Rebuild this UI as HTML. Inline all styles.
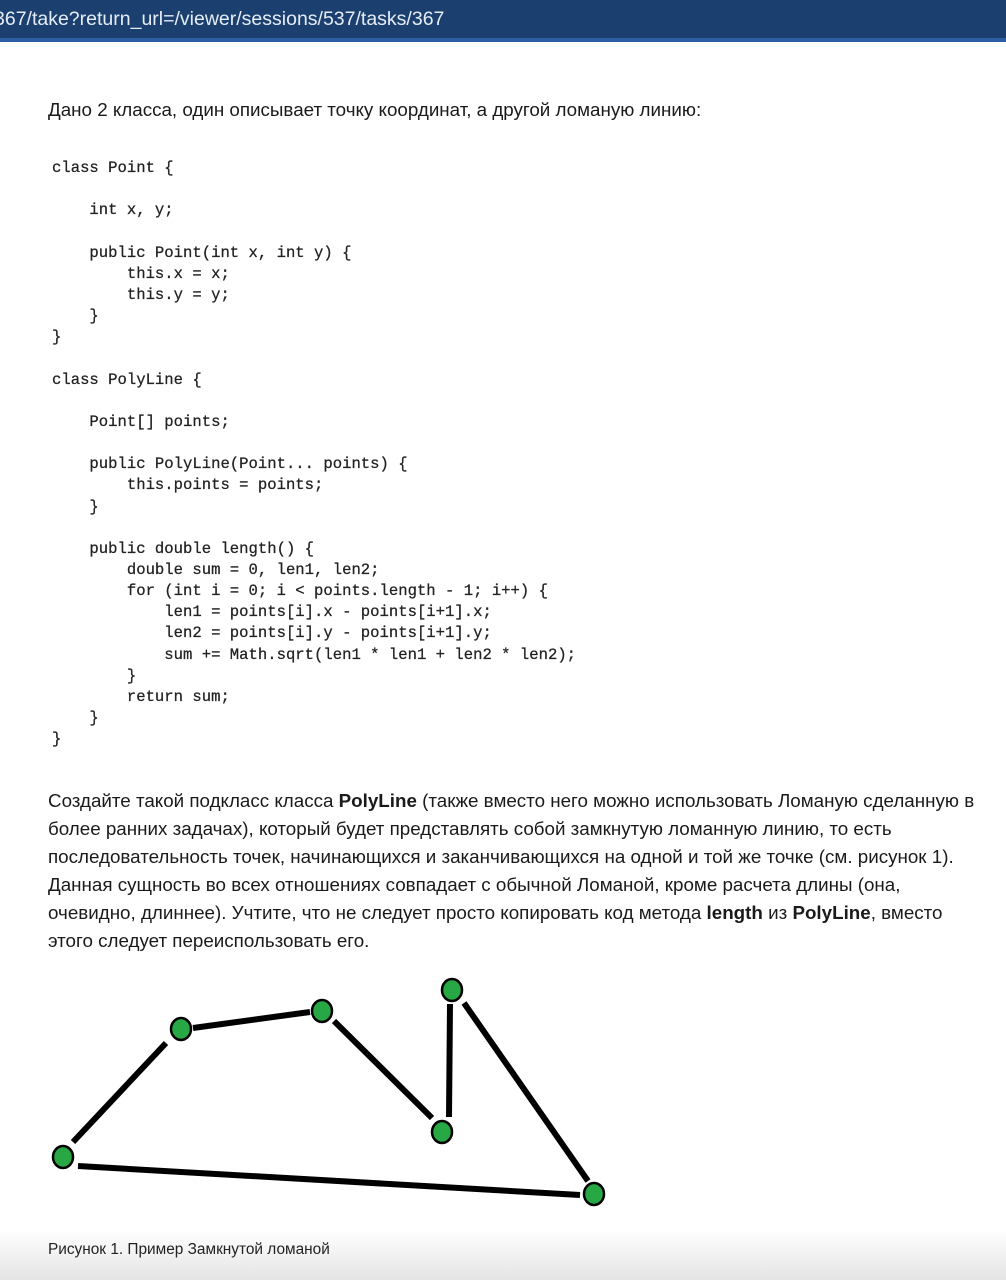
<!DOCTYPE html>
<html><head><meta charset="utf-8"><style>
html,body{margin:0;padding:0;background:#fff;width:1006px;height:1280px;overflow:hidden;position:relative}
.top{position:absolute;left:0;top:0;width:1006px;height:38px;background:#1b406f;color:#e6ecf5;font:19.5px "Liberation Sans",sans-serif;line-height:38px;white-space:nowrap}
.top span{position:absolute;left:-6px;top:0}
.strip{position:absolute;left:0;top:38px;width:1006px;height:4px;background:#2b5ea3}
.p{position:absolute;left:48px;font:18.8px "Liberation Sans",sans-serif;color:#1a1a1a;white-space:nowrap;line-height:28px}
pre{position:absolute;left:52px;top:158px;margin:0;font:15.6px "Liberation Mono",monospace;line-height:21.15px;color:#222;-webkit-text-stroke:0.25px #222}
.foot{position:absolute;left:0;top:1230px;width:1006px;height:50px;background:linear-gradient(#fff,#e4e4e4)}
.cap{position:absolute;left:48px;top:1241px;font:15.4px "Liberation Sans",sans-serif;color:#222}
</style></head><body>
<div class="top"><span>367/take?return_url=/viewer/sessions/537/tasks/367</span></div>
<div class="strip"></div>
<div class="p" style="top:96px">Дано 2 класса, один описывает точку координат, а другой ломаную линию:</div>
<pre>class Point {

    int x, y;

    public Point(int x, int y) {
        this.x = x;
        this.y = y;
    }
}

class PolyLine {

    Point[] points;

    public PolyLine(Point... points) {
        this.points = points;
    }

    public double length() {
        double sum = 0, len1, len2;
        for (int i = 0; i &lt; points.length - 1; i++) {
            len1 = points[i].x - points[i+1].x;
            len2 = points[i].y - points[i+1].y;
            sum += Math.sqrt(len1 * len1 + len2 * len2);
        }
        return sum;
    }
}</pre>
<div class="p" style="top:787px">Создайте такой подкласс класса <b>PolyLine</b> (также вместо него можно использовать Ломаную сделанную в<br>более ранних задачах), который будет представлять собой замкнутую ломанную линию, то есть<br>последовательность точек, начинающихся и заканчивающихся на одной и той же точке (см. рисунок 1).<br>Данная сущность во всех отношениях совпадает с обычной Ломаной, кроме расчета длины (она,<br>очевидно, длиннее). Учтите, что не следует просто копировать код метода <b>length</b> из <b>PolyLine</b>, вместо<br>этого следует переиспользовать его.</div>
<div class="foot"></div>
<svg style="position:absolute;left:0;top:0" width="1006" height="1280">
<g stroke="#000" stroke-width="6" stroke-linecap="butt">
<line x1="73" y1="1142" x2="166" y2="1043"/>
<line x1="193" y1="1028" x2="310" y2="1012"/>
<line x1="334" y1="1021" x2="432" y2="1118"/>
<line x1="449" y1="1117" x2="450" y2="1004"/>
<line x1="464" y1="1003" x2="588" y2="1181"/>
<line x1="78" y1="1166" x2="580" y2="1195"/>
</g>
<g fill="#27a844" stroke="#000" stroke-width="2.5">
<ellipse cx="63" cy="1157" rx="10" ry="11"/>
<ellipse cx="181" cy="1029" rx="10" ry="11"/>
<ellipse cx="322" cy="1011" rx="10" ry="11"/>
<ellipse cx="452" cy="990" rx="10" ry="11"/>
<ellipse cx="442" cy="1132" rx="10" ry="11"/>
<ellipse cx="594" cy="1194" rx="10" ry="11"/>
</g>
</svg>
<div class="cap">Рисунок 1. Пример Замкнутой ломаной</div>
</body></html>
